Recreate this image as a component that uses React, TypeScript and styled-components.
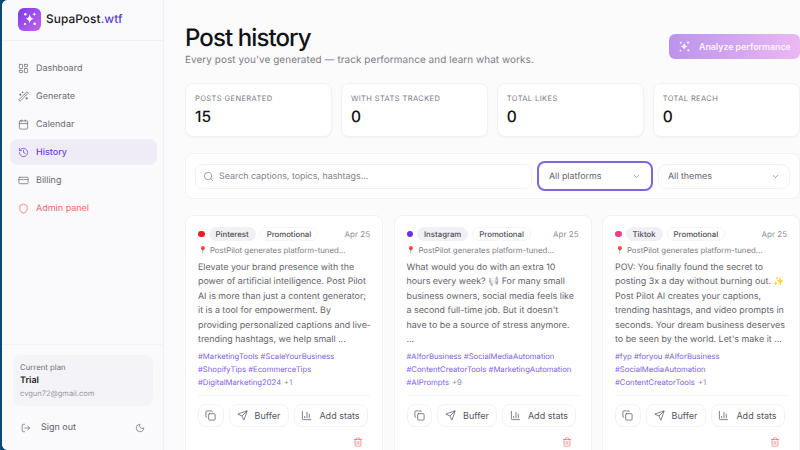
import React from 'react';
import styled, { createGlobalStyle } from 'styled-components';
import {
  BarChart3,
  Calendar,
  ChevronDown,
  Copy,
  CreditCard,
  History,
  LayoutDashboard,
  LogOut,
  Moon,
  Search,
  Send,
  Shield,
  Trash2,
  WandSparkles,
} from 'lucide-react';

const GlobalStyle = createGlobalStyle`
  html, body {
    margin: 0;
    width: 800px;
    height: 450px;
    overflow: hidden;
    background: #0b4a78;
    font-family: Inter, "Liberation Sans", sans-serif;
    text-rendering: geometricPrecision;
  }
  * { box-sizing: border-box; }
`;

const Shell = styled.div`
  display: flex;
  width: 798px;
  height: 450px;
  margin-left: 2px;
  border-radius: 6px 0 0 6px;
  overflow: hidden;
  background: #fbfbfc;
`;

const Sidebar = styled.aside`
  display: flex;
  flex-direction: column;
  flex: 0 0 162px;
  background: #faf9fc;
  border-right: 1px solid #f0eff3;
`;

const Brand = styled.div`
  display: flex;
  align-items: center;
  gap: 5px;
  flex: none;
  height: 41px;
  padding: 0 0 2px 16px;
  border-bottom: 1px solid #f0eff3;
`;

const LogoBox = styled.div`
  display: flex;
  align-items: center;
  justify-content: center;
  width: 23px;
  height: 23px;
  border-radius: 6px;
  background: linear-gradient(135deg, #7c3aed, #c264ea);
`;

const BrandName = styled.span`
  font-size: 11.8px;
  font-weight: 500;
  color: #17171c;
  letter-spacing: 0.1px;
`;

const BrandTld = styled.span`
  color: #5b3fd6;
`;

const Nav = styled.nav`
  display: flex;
  flex-direction: column;
  gap: 2px;
  padding: 14px 6px 0 8px;
`;

const NavItem = styled.div<{ $active?: boolean; $danger?: boolean }>`
  display: flex;
  align-items: center;
  gap: 7px;
  height: 26px;
  padding: 0 8px;
  border-radius: 8px;
  font-size: 9px;
  font-weight: ${p => (p.$active ? 500 : 400)};
  color: ${p => (p.$active ? '#6d45e0' : p.$danger ? '#ec6a6a' : '#6b6b76')};
  background: ${p => (p.$active ? '#efecf6' : 'transparent')};
`;

const SidebarFoot = styled.div`
  display: flex;
  flex-direction: column;
  margin-top: auto;
  padding: 10px 10px 1px 11px;
  border-top: 1px solid #f3f2f6;
`;

const PlanCard = styled.div`
  display: flex;
  flex-direction: column;
  justify-content: center;
  gap: 3.5px;
  height: 51px;
  padding: 0 7px;
  border-radius: 8px;
  background: #f4f3f8;
`;

const PlanLabel = styled.span`
  font-size: 7.8px;
  line-height: 10px;
  color: #6f6f7a;
`;

const PlanName = styled.span`
  font-size: 9px;
  line-height: 10px;
  font-weight: 600;
  color: #26262c;
`;

const PlanMail = styled.span`
  font-size: 7.5px;
  line-height: 10px;
  color: #9a9aa4;
`;

const FootRow = styled.div`
  display: flex;
  align-items: center;
  gap: 10px;
  height: 43px;
  padding: 0 8px;
  font-size: 9px;
  color: #63636e;
`;

const MoonWrap = styled.span`
  display: flex;
  margin-left: auto;
`;

const Main = styled.main`
  display: flex;
  flex-direction: column;
  flex: 1;
  min-width: 0;
  padding: 0 0 0 21px;
`;

const Header = styled.header`
  display: flex;
  flex: none;
  align-items: flex-start;
  justify-content: space-between;
  height: 83px;
`;

const Title = styled.h1`
  margin: 23px 0 0;
  font-size: 24px;
  line-height: 30px;
  font-weight: 500;
  letter-spacing: -0.9px;
  color: #121216;
`;

const Subtitle = styled.p`
  margin: 0;
  font-size: 9.9px;
  line-height: 14px;
  color: #7a7a84;
  letter-spacing: 0.1px;
`;

const AnalyzeButton = styled.button`
  display: flex;
  align-items: center;
  gap: 8px;
  width: 131px;
  height: 25px;
  margin-top: 34px;
  padding: 0 9px;
  border: 0;
  border-radius: 6px;
  font-family: inherit;
  font-size: 8.8px;
  font-weight: 600;
  white-space: nowrap;
  color: #fbf3fe;
  background: linear-gradient(90deg, #bb93ee, #eab8f2);
`;

const StatRow = styled.section`
  display: grid;
  flex: none;
  grid-template-columns: repeat(4, 1fr);
  gap: 8.5px;
`;

const StatCard = styled.div`
  display: flex;
  flex-direction: column;
  height: 54px;
  padding: 10px 9px;
  border-radius: 8px;
  background: #fff;
  border: 1px solid #f2f2f5;
  box-shadow: 0 1px 2px rgba(20, 20, 40, 0.03);
`;

const StatLabel = styled.span`
  font-size: 7.5px;
  line-height: 10px;
  letter-spacing: 0.4px;
  color: #7b7885;
`;

const StatValue = styled.span`
  margin-top: 3px;
  font-size: 15.5px;
  line-height: 20px;
  font-weight: 500;
  color: #121216;
`;

const FilterBar = styled.section`
  display: flex;
  flex: none;
  align-items: center;
  gap: 5px;
  height: 46px;
  margin-top: 16px;
  padding: 0 9px;
  border-radius: 8px;
  background: #fff;
  border: 1px solid #f2f2f5;
`;

const SearchBox = styled.div`
  display: flex;
  flex: 1;
  align-items: center;
  gap: 5px;
  height: 25px;
  padding: 0 7px;
  border: 1px solid #f1f1f4;
  border-radius: 7px;
  font-size: 8.9px;
  color: #80808a;
`;

const SelectBox = styled.div<{ $focused?: boolean; $width: number }>`
  display: flex;
  flex: 0 0 ${p => p.$width}px;
  align-items: center;
  justify-content: space-between;
  height: ${p => (p.$focused ? 30 : 25)}px;
  padding: 0 ${p => (p.$focused ? 10 : 9)}px;
  border: ${p => (p.$focused ? '2px solid #7f66e0' : '1px solid #f1f1f4')};
  border-radius: 8px;
  font-size: 8.9px;
  color: #63636e;
`;

const CardGrid = styled.section`
  display: grid;
  flex: none;
  grid-template-columns: repeat(3, 198px);
  gap: 10.5px;
  margin-top: 16px;
`;

const Card = styled.article`
  display: flex;
  flex-direction: column;
  height: 260px;
  padding: 9px 12px;
  border-radius: 8px;
  background: #fff;
  border: 1px solid #f2f2f5;
`;

const CardTop = styled.div`
  display: flex;
  align-items: center;
  gap: 4px;
  flex: none;
  height: 18px;
`;

const Dot = styled.span<{ $color: string }>`
  flex: 0 0 6.5px;
  height: 6.5px;
  border-radius: 50%;
  background: ${p => p.$color};
`;

const Chip = styled.span<{ $filled?: boolean }>`
  padding: 0 6px;
  line-height: 12px;
  border-radius: 7px;
  font-size: 7.8px;
  font-weight: 500;
  white-space: nowrap;
  color: #4f4f59;
  background: ${p => (p.$filled ? '#f1f0f5' : '#fff')};
  border: 1px solid ${p => (p.$filled ? '#f1f0f5' : '#f5f5f7')};
`;

const CardDate = styled.span`
  margin-left: auto;
  font-size: 8px;
  color: #8c8c96;
`;

const PinLine = styled.div`
  flex: none;
  margin-top: 1px;
  font-size: 7.8px;
  line-height: 12px;
  color: #7b7b85;
  white-space: nowrap;
`;

const CardBody = styled.div`
  flex: none;
  height: 87px;
  margin-top: 5px;
  font-size: 8.9px;
  line-height: 14.4px;
  color: #5f5f69;
  white-space: pre;
`;

const BodyLine = styled.div``;

const FadedEmoji = styled.span`
  opacity: 0.45;
  filter: grayscale(1);
`;

const TagList = styled.div`
  flex: none;
  height: 39px;
  margin-top: 3px;
  font-size: 7.7px;
  line-height: 12.8px;
  color: #7f5fe6;
  white-space: pre;
`;

const TagLine = styled.div`
  display: flex;
  gap: 3px;
`;

const More = styled.span`
  color: #8c8c96;
`;

const Actions = styled.div`
  display: flex;
  flex: none;
  gap: 5px;
  margin-top: 5px;
  padding-top: 8px;
  border-top: 1px solid #f3f3f6;
`;

const ActionButton = styled.button<{ $width: number }>`
  display: flex;
  flex: 0 0 ${p => p.$width}px;
  align-items: center;
  justify-content: center;
  gap: 7px;
  height: 23px;
  padding: 0;
  border: 1px solid #f3f3f6;
  border-radius: 8px;
  background: #fff;
  font-family: inherit;
  font-size: 9px;
  color: #55555f;
`;

const TrashRow = styled.div`
  display: flex;
  flex: none;
  justify-content: flex-end;
  margin-top: 10px;
  padding-right: 7px;
`;

const LogoMark = ({ size, color }: { size: number; color: string }) => (
  <svg width={size} height={size} viewBox="0 0 24 24" fill={color}>
    <path d="M11.5 5c.8 4.3 2.4 6 6.5 6.8-4.1.8-5.7 2.5-6.5 6.8-.8-4.3-2.4-6-6.5-6.8 4.1-.8 5.7-2.5 6.5-6.8z" />
    <path d="M18.5 1.5c.4 2.1 1.2 3 3.2 3.4-2 .4-2.8 1.3-3.2 3.4-.4-2.1-1.2-3-3.2-3.4 2-.4 2.8-1.3 3.2-3.4z" />
    <circle cx="5" cy="5" r="1.9" />
    <circle cx="19" cy="19" r="1.9" />
    <circle cx="4.5" cy="19.5" r="1.6" />
  </svg>
);

const navItems = [
  { label: 'Dashboard', Icon: LayoutDashboard },
  { label: 'Generate', Icon: WandSparkles },
  { label: 'Calendar', Icon: Calendar },
  { label: 'History', Icon: History, active: true },
  { label: 'Billing', Icon: CreditCard },
  { label: 'Admin panel', Icon: Shield, danger: true },
];

const stats = [
  { label: 'POSTS GENERATED', value: '15' },
  { label: 'WITH STATS TRACKED', value: '0' },
  { label: 'TOTAL LIKES', value: '0' },
  { label: 'TOTAL REACH', value: '0' },
];

const posts = [
  {
    platform: 'Pinterest',
    color: '#ee1c25',
    body: [
      'Elevate your brand presence with the',
      'power of artificial intelligence. Post Pilot',
      'AI is more than just a content generator;',
      'it is a tool for empowerment. By',
      'providing personalized captions and live-',
      'trending hashtags, we help small ...',
    ],
    tags: ['#MarketingTools #ScaleYourBusiness', '#ShopifyTips #EcommerceTips'],
    lastTag: '#DigitalMarketing2024',
    more: '+1',
  },
  {
    platform: 'Instagram',
    color: '#6d2fe8',
    body: [
      'What would you do with an extra 10',
      <>
        hours every week? <FadedEmoji>📢</FadedEmoji> For many small
      </>,
      'business owners, social media feels like',
      "a second full-time job. But it doesn't",
      'have to be a source of stress anymore.',
      '...',
    ],
    tags: ['#AIforBusiness #SocialMediaAutomation', '#ContentCreatorTools #MarketingAutomation'],
    lastTag: '#AIPrompts',
    more: '+9',
  },
  {
    platform: 'Tiktok',
    color: '#ee3d8f',
    body: [
      'POV: You finally found the secret to',
      'posting 3x a day without burning out. ✨',
      'Post Pilot AI creates your captions,',
      'trending hashtags, and video prompts in',
      'seconds. Your dream business deserves',
      "to be seen by the world. Let's make it ...",
    ],
    tags: ['#fyp #foryou #AIforBusiness', '#SocialMediaAutomation'],
    lastTag: '#ContentCreatorTools',
    more: '+1',
  },
];

export default function App() {
  return (
    <>
      <GlobalStyle />
      <Shell>
        <Sidebar>
          <Brand>
            <LogoBox>
              <LogoMark size={16} color="#fff" />
            </LogoBox>
            <BrandName>
              SupaPost<BrandTld>.wtf</BrandTld>
            </BrandName>
          </Brand>
          <Nav>
            {navItems.map(({ label, Icon, active, danger }) => (
              <NavItem key={label} $active={active} $danger={danger}>
                <Icon size={11} strokeWidth={1.6} />
                {label}
              </NavItem>
            ))}
          </Nav>
          <SidebarFoot>
            <PlanCard>
              <PlanLabel>Current plan</PlanLabel>
              <PlanName>Trial</PlanName>
              <PlanMail>cvgun72@gmail.com</PlanMail>
            </PlanCard>
            <FootRow>
              <LogOut size={10} strokeWidth={1.6} />
              Sign out
              <MoonWrap>
                <Moon size={10} strokeWidth={1.6} />
              </MoonWrap>
            </FootRow>
          </SidebarFoot>
        </Sidebar>
        <Main>
          <Header>
            <div>
              <Title>Post history</Title>
              <Subtitle>Every post you've generated — track performance and learn what works.</Subtitle>
            </div>
            <AnalyzeButton>
              <LogoMark size={13} color="#fbf3fe" />
              Analyze performance
            </AnalyzeButton>
          </Header>
          <StatRow>
            {stats.map(s => (
              <StatCard key={s.label}>
                <StatLabel>{s.label}</StatLabel>
                <StatValue>{s.value}</StatValue>
              </StatCard>
            ))}
          </StatRow>
          <FilterBar>
            <SearchBox>
              <Search size={11} strokeWidth={1.6} />
              Search captions, topics, hashtags...
            </SearchBox>
            <SelectBox $focused $width={116}>
              All platforms
              <ChevronDown size={9} strokeWidth={1.6} />
            </SelectBox>
            <SelectBox $width={132}>
              All themes
              <ChevronDown size={9} strokeWidth={1.6} />
            </SelectBox>
          </FilterBar>
          <CardGrid>
            {posts.map(post => (
              <Card key={post.platform}>
                <CardTop>
                  <Dot $color={post.color} />
                  <Chip $filled>{post.platform}</Chip>
                  <Chip>Promotional</Chip>
                  <CardDate>Apr 25</CardDate>
                </CardTop>
                <PinLine>📍 PostPilot generates platform-tuned...</PinLine>
                <CardBody>
                  {post.body.map((line, i) => (
                    <BodyLine key={i}>{line}</BodyLine>
                  ))}
                </CardBody>
                <TagList>
                  {post.tags.map(line => (
                    <TagLine key={line}>{line}</TagLine>
                  ))}
                  <TagLine>
                    <span>{post.lastTag}</span>
                    <More>{post.more}</More>
                  </TagLine>
                </TagList>
                <Actions>
                  <ActionButton $width={25.5}>
                    <Copy size={11} strokeWidth={1.6} />
                  </ActionButton>
                  <ActionButton $width={60}>
                    <Send size={11} strokeWidth={1.6} />
                    Buffer
                  </ActionButton>
                  <ActionButton $width={74}>
                    <BarChart3 size={11} strokeWidth={1.6} />
                    Add stats
                  </ActionButton>
                </Actions>
                <TrashRow>
                  <Trash2 size={10} strokeWidth={1.6} color="#ec6a6a" />
                </TrashRow>
              </Card>
            ))}
          </CardGrid>
        </Main>
      </Shell>
    </>
  );
}
